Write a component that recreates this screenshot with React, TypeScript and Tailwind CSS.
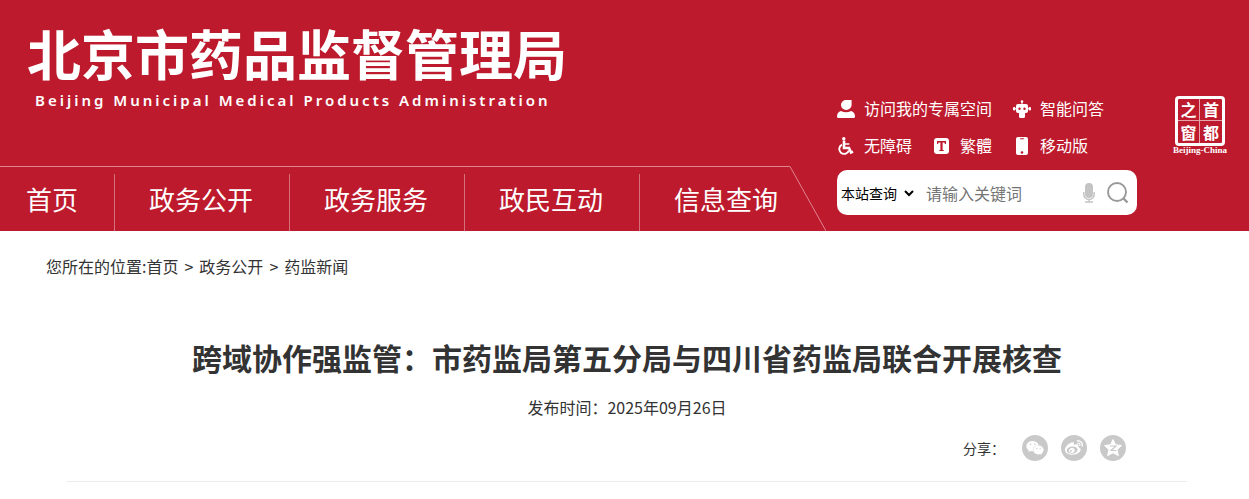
import { FaWeibo, FaWeixin } from "react-icons/fa";

const NAV_ITEMS = ["政务公开", "政务服务", "政民互动", "信息查询"];

function UserIcon() {
  return (
    <svg width="18" height="18" viewBox="0 0 18 18" fill="#fff">
      <path d="M9 0h5.600v5A5.300 5.300 0 0 1 9.200 10 5 5 0 0 1 4 5 5 5 0 0 1 9 0Z" />
      <path d="M4 11q5 2.400 10 0 4 1 4 5.500 0 1.500-1.500 1.500h-15Q0 18 0 16.500 0 12 4 11Z" />
    </svg>
  );
}

function RobotIcon() {
  return (
    <svg width="18" height="18" viewBox="0 0 18 18" fill="#fff">
      <circle cx="9" cy="1.500" r="1.300" />
      <rect x="8.500" y="2" width="1" height="3" />
      <rect x="3" y="4" width="12" height="9" rx="2" />
      <rect x="0" y="7" width="2.400" height="3.400" rx="1" />
      <rect x="15.600" y="7" width="2.400" height="3.400" rx="1" />
      <path d="M1 8.200h16v1H1z" />
      <path d="M6 12h6v4.500a1.500 1.500 0 0 1-1.500 1.500h-3A1.500 1.500 0 0 1 6 16.500Z" />
      <circle cx="6.500" cy="8.700" r="1.200" fill="#bd1a2d" />
      <circle cx="11.500" cy="8.700" r="1.200" fill="#bd1a2d" />
    </svg>
  );
}

function WheelchairIcon() {
  return (
    <svg width="18" height="18" viewBox="0 0 18 18" fill="none" stroke="#fff">
      <circle cx="6.800" cy="1.800" r="1.700" fill="#fff" stroke="none" />
      <path d="M7 3.500v7.500h5l2 4.500 2-.9" strokeWidth="2.600" />
      <path d="M7.500 7h4.800" strokeWidth="1.500" />
      <path d="M5 7.600a4.900 4.900 0 1 0 6.800 6" strokeWidth="1.900" />
    </svg>
  );
}

function TraditionalIcon() {
  return (
    <svg width="18" height="18" viewBox="0 0 18 18">
      <rect x="1" y="1" width="15" height="16" rx="3" fill="#fff" />
      <path
        d="M4 4h9v3h-1l-.6-1.500H9.600v7.400l1.300.4v.8H6.100v-.8l1.300-.4V5.500H5.600L5 7H4Z"
        fill="#bd1a2d"
      />
    </svg>
  );
}

function PhoneIcon() {
  return (
    <svg width="18" height="18" viewBox="0 0 18 18">
      <rect x="3" y="0" width="12" height="18" rx="2" fill="#fff" />
      <rect x="7" y="1.200" width="4" height="1" rx="0.500" fill="#bd1a2d" />
      <circle cx="9" cy="15.500" r="1.300" fill="#bd1a2d" />
    </svg>
  );
}

function MicIcon() {
  return (
    <svg width="12" height="20" viewBox="0 0 12 20">
      <rect x="2" y="0" width="8" height="15" rx="4" fill="#c4c4c4" />
      <path
        d="M.8 9v2.500a5.200 5 0 0 0 10.400 0V9M6 16.500V19M2 19h8"
        fill="none"
        stroke="#c4c4c4"
        strokeWidth="1.500"
      />
    </svg>
  );
}

function SearchIcon() {
  return (
    <svg width="22" height="22" viewBox="0 0 22 22" fill="none" stroke="#999">
      <circle cx="10" cy="10" r="9" strokeWidth="1.900" />
      <path d="m16 16 4.500 4.500" strokeWidth="2.400" />
    </svg>
  );
}

function QzoneIcon() {
  return (
    <svg width="18" height="18" viewBox="0 0 18 18">
      <path
        d="m9 .5 2.500 5.300 6 .7-4.400 4.100 1.200 6L9 13.800l-5.300 2.800 1.200-6L.5 6.500l6-.7Z"
        fill="#fff"
        stroke="#fff"
        strokeLinejoin="round"
      />
      <path
        d="M6 7h6l-5 4.500h5.500"
        fill="none"
        stroke="#c9c9c9"
        strokeWidth="1.200"
      />
    </svg>
  );
}

const QUICK_LINKS = [
  [
    { label: "访问我的专属空间", icon: <UserIcon /> },
    { label: "智能问答", icon: <RobotIcon /> },
  ],
  [
    { label: "无障碍", icon: <WheelchairIcon /> },
    { label: "繁體", icon: <TraditionalIcon /> },
    { label: "移动版", icon: <PhoneIcon /> },
  ],
];

const SHARE_LINKS = [
  { label: "微信", icon: <FaWeixin size={18} /> },
  { label: "微博", icon: <FaWeibo size={18} /> },
  { label: "QQ空间", icon: <QzoneIcon /> },
];

function CapitalWindow() {
  return (
    <a href="#" className="mt-[96px] ml-auto flex flex-col items-center text-white">
      <span className="grid h-[50px] w-[50px] grid-cols-2 grid-rows-2 rounded-sm border-[3px] border-white text-base leading-[21px] font-bold">
        <span className="flex items-center justify-center border-r border-b border-white/60">
          之
        </span>
        <span className="flex items-center justify-center border-b border-white/60">
          首
        </span>
        <span className="flex items-center justify-center border-r border-white/60">
          窗
        </span>
        <span className="flex items-center justify-center">都</span>
      </span>
      <span className="font-['Liberation_Serif',serif] text-[9px] leading-[9px] font-bold">
        Beijing-China
      </span>
    </a>
  );
}

export default function App() {
  return (
    <div
      lang="zh-CN"
      className="min-h-screen bg-white font-['Noto_Sans_CJK_SC',sans-serif] text-[#333]"
    >
      <header className="flex bg-[#bd1a2d] pr-[22px] text-white">
        <div className="flex shrink-0 flex-col">
          <a href="#" className="block pt-[19px] pl-[27px]">
            <h1 className="text-[54px] leading-[68px] font-bold">
              北京市药品监督管理局
            </h1>
            <p className="pl-2 font-['Noto_Sans',sans-serif] text-[15px] leading-[26px] font-semibold tracking-[3px]">
              Beijing Municipal Medical Products Administration
            </p>
          </a>

          <nav className="mt-auto flex text-[26px] leading-[50px]">
            <div className="flex border-t border-[#e08590] pt-[7px]">
              <a href="#" className="block h-[57px] w-[114px] pl-[26px]">
                首页
              </a>
              {NAV_ITEMS.map((item) => (
                <a
                  key={item}
                  href="#"
                  className="block h-[57px] border-l border-[#d5717d] pr-9 pl-[34px] last:pr-3"
                >
                  {item}
                </a>
              ))}
            </div>
            <svg width="36" height="65" viewBox="0 0 36 65">
              <path d="M0 .5 36 65" stroke="#e08590" />
            </svg>
          </nav>
        </div>

        <div className="ml-[11px] w-[300px] shrink-0 pt-[90px] pb-4">
          {QUICK_LINKS.map((row, i) => (
            <div key={i} className="flex h-[37px] items-center gap-[21px]">
              {row.map((link) => (
                <a
                  key={link.label}
                  href="#"
                  className="flex items-center gap-[9px] text-base"
                >
                  {link.icon}
                  <span className="pb-0.5">{link.label}</span>
                </a>
              ))}
            </div>
          ))}

          <form className="mt-1.5 flex h-[45px] items-center rounded-[10px] bg-white pr-2">
            <select
              aria-label="查询范围"
              className="w-[80px] bg-white text-sm text-black"
            >
              <option>本站查询</option>
            </select>
            <input
              type="text"
              aria-label="关键词"
              placeholder="请输入关键词"
              className="ml-[9px] w-0 flex-1 text-base text-[#333] outline-none placeholder:text-[#757575]"
            />
            <button type="button" aria-label="语音输入" className="mr-3">
              <MicIcon />
            </button>
            <button type="submit" aria-label="搜索">
              <SearchIcon />
            </button>
          </form>
        </div>

        <CapitalWindow />
      </header>

      <nav
        aria-label="当前位置"
        className="flex px-[46px] pt-[23px] text-base leading-6"
      >
        <span>您所在的位置:</span>
        <a href="#">首页</a>
        <span className="mx-1.5">&gt;</span>
        <a href="#">政务公开</a>
        <span className="mx-1.5">&gt;</span>
        <a href="#">药监新闻</a>
      </nav>

      <main className="mr-[62px] ml-[67px] border-b border-[#ececec] pt-[59px] pb-5">
        <h2 className="text-center text-[30px] leading-[40px] font-bold">
          跨域协作强监管：市药监局第五分局与四川省药监局联合开展核查
        </h2>
        <p className="mt-[18px] text-center text-base leading-6">
          发布时间：2025年09月26日
        </p>
        <div className="mt-4 flex items-center justify-end gap-[13px] pr-[61px]">
          <span className="mr-1 text-sm">分享：</span>
          {SHARE_LINKS.map((link) => (
            <a
              key={link.label}
              href="#"
              aria-label={link.label}
              className="flex h-[26px] w-[26px] items-center justify-center rounded-full bg-[#c9c9c9] text-white"
            >
              {link.icon}
            </a>
          ))}
        </div>
      </main>
    </div>
  );
}
